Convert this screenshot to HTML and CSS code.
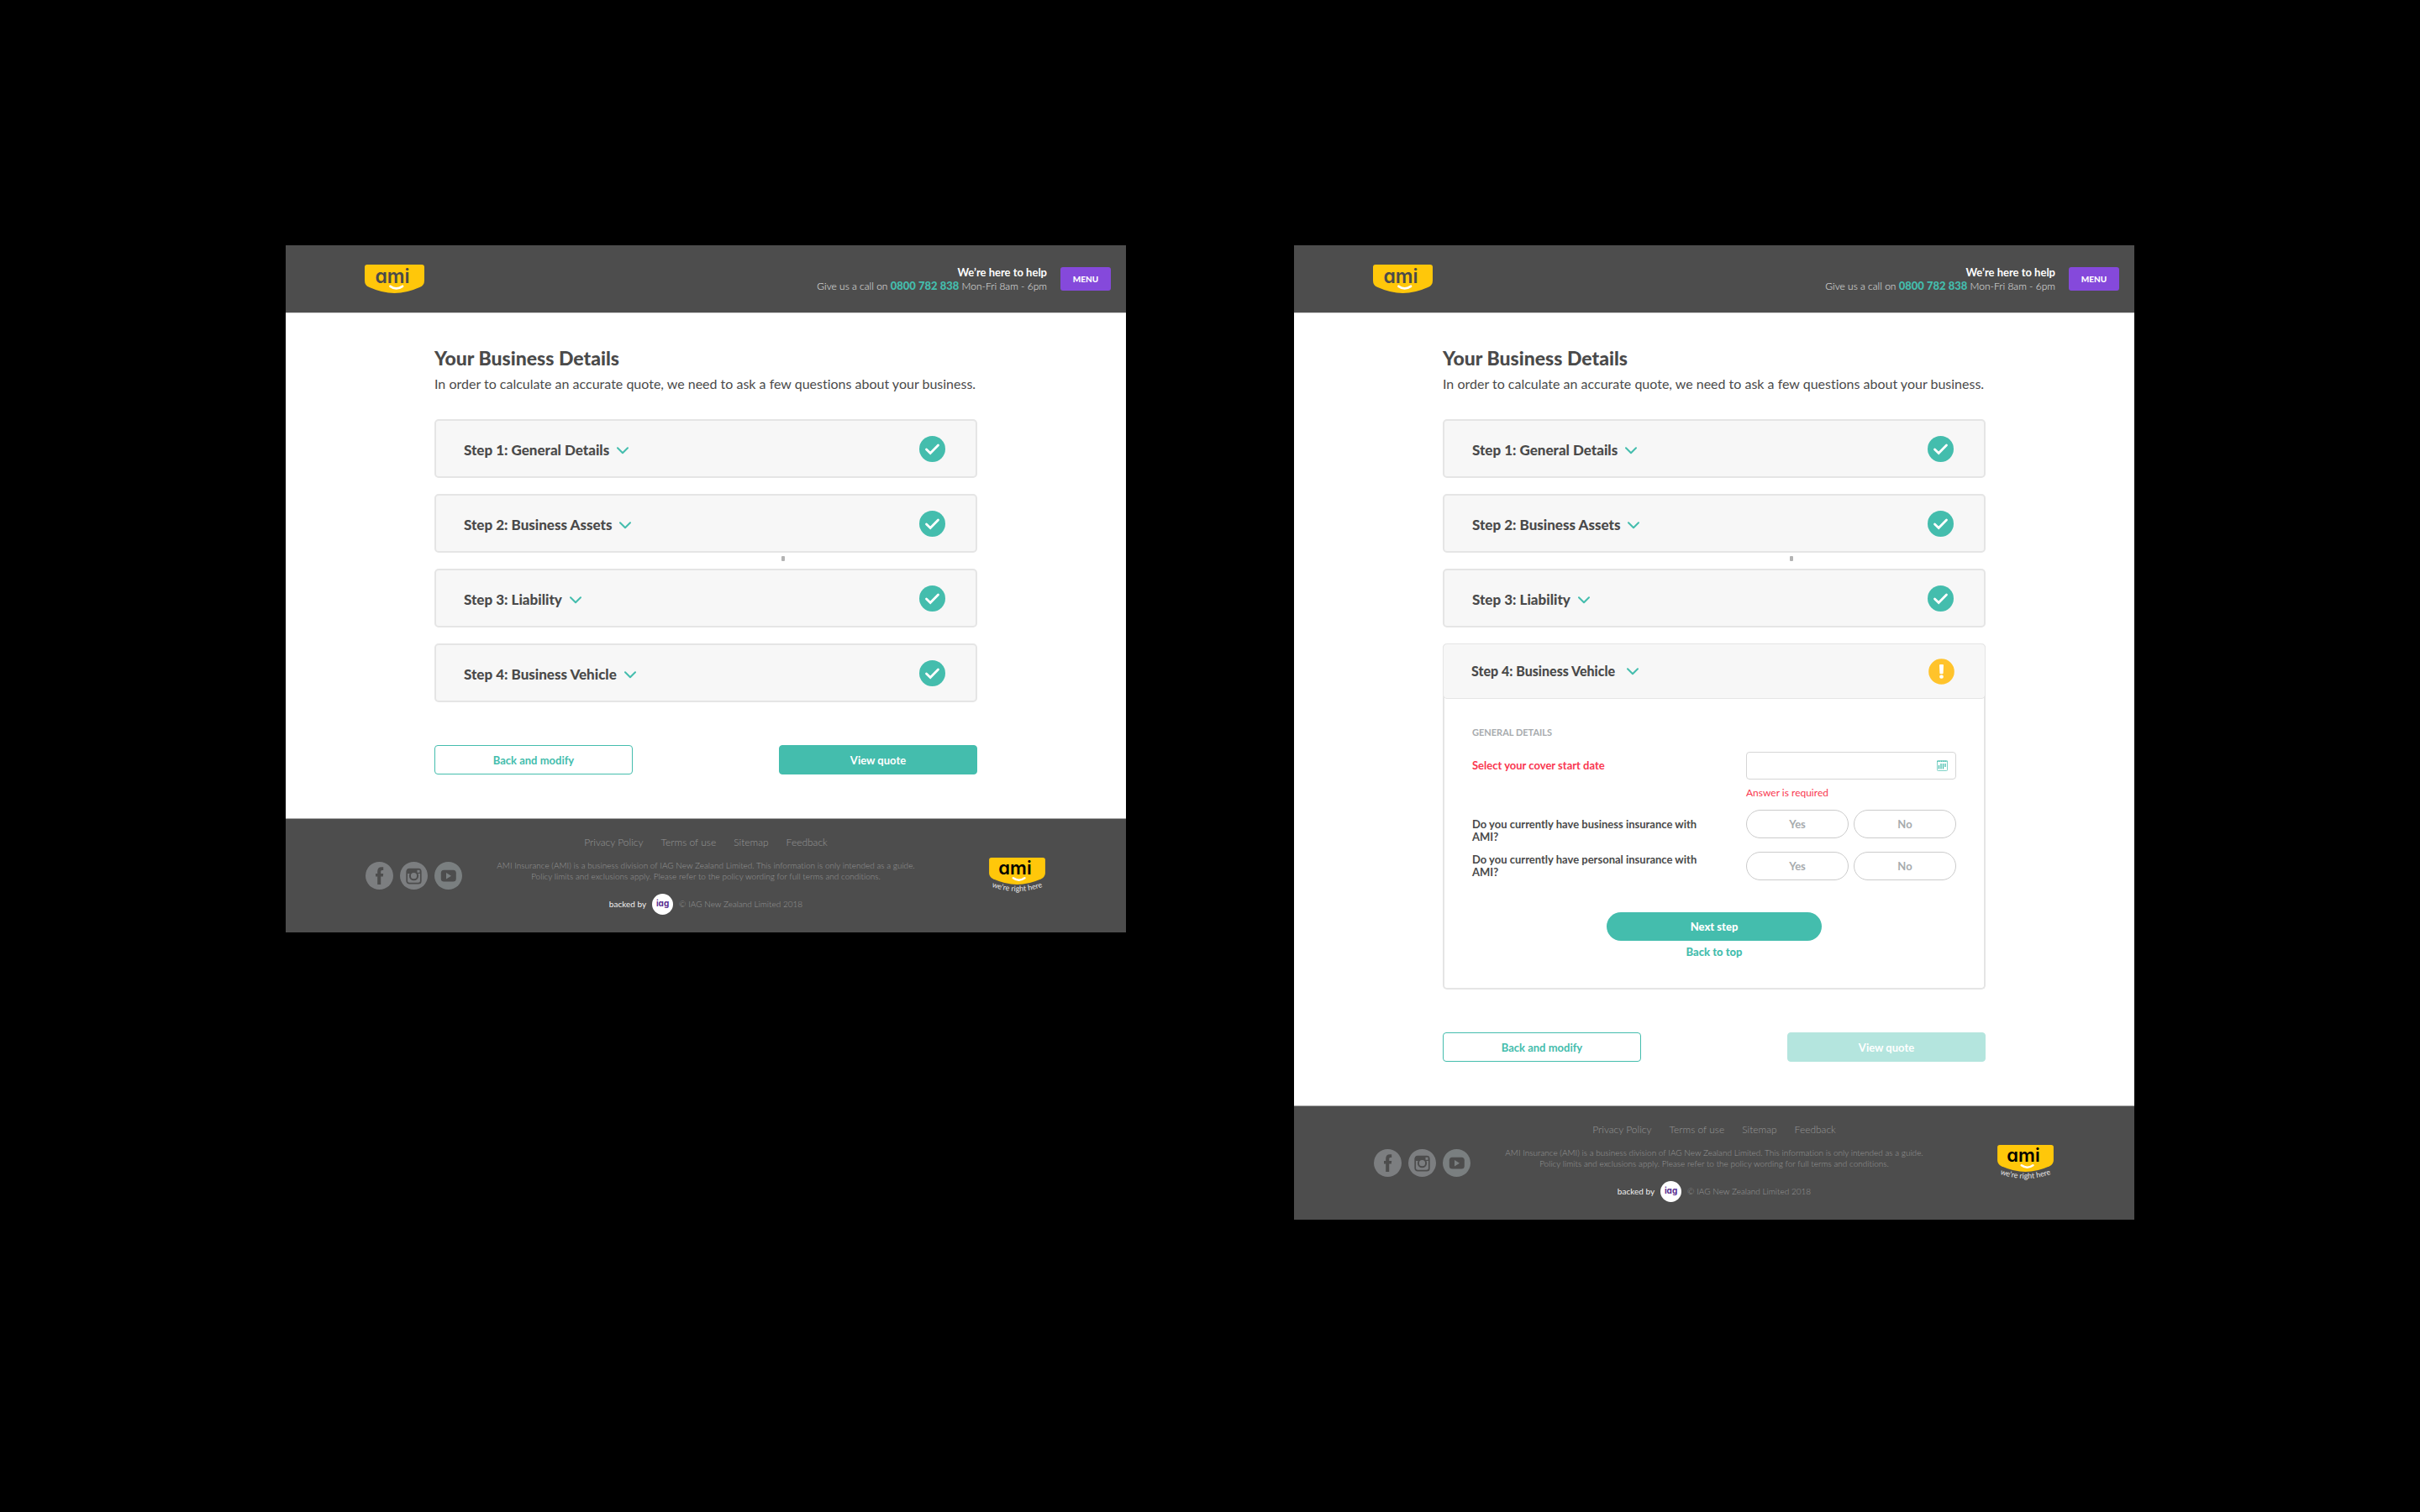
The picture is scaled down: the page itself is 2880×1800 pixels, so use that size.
FILE: index.html
```html
<!DOCTYPE html>
<html lang="en">
<head>
<meta charset="utf-8">
<meta name="viewport" content="width=device-width, initial-scale=1">
<title>AMI – Your Business Details</title>
<link rel="stylesheet" href="styles.css">
</head>
<body>
<svg class="sprite" aria-hidden="true">
  <symbol id="chevron" viewBox="0 0 14 9"><path d="M1 1.2 7 7.2 13 1.2" fill="none" stroke="#44bdad" stroke-width="2" stroke-linecap="round" stroke-linejoin="round"/></symbol>
  <symbol id="tick" viewBox="0 0 31 31"><circle cx="15.500" cy="15.500" r="15.500" fill="#44bdad"/><path d="M8.500 16 13.200 20.500 22.500 11" fill="none" stroke="#fff" stroke-width="2.800" stroke-linecap="round"/></symbol>
  <symbol id="warning" viewBox="0 0 31 31"><circle cx="15.500" cy="15.500" r="15.300" fill="#ffc32b"/><path d="M13 7.800Q13 7 14 7H17Q18 7 18 7.800L17.600 17Q17.500 18.200 16.800 18.200H14.200Q13.500 18.200 13.400 17Z" fill="#fff"/><rect x="13.200" y="19.500" width="4.600" height="4.200" rx="1.800" fill="#fff"/></symbol>
  <symbol id="badge" viewBox="0 0 71 34"><path d="M3 0H68Q71 0 71 3V19Q71 24.500 66 26.800Q50 34 35.500 34T5 26.800Q0 24.500 0 19V3Q0 0 3 0Z" fill="#ffc70a"/><path d="M30.500 25.800Q37.500 31 45 25.800" fill="none" stroke="#fff" stroke-width="2.800" stroke-linecap="round"/></symbol>
  <symbol id="facebook" viewBox="0 0 33 33"><circle cx="16.500" cy="16.500" r="16.500" fill="#7c7e80"/><path d="M14.200 27V17.500H12V14H14.200V11.500Q14.200 6.200 19 6.200H21.200V10H19.600Q18.200 10 18.200 11.500V14H21.200L20.800 17.500H18.200V27Z" fill="#4d4d4d"/></symbol>
  <symbol id="instagram" viewBox="0 0 33 33"><circle cx="16.500" cy="16.500" r="16.500" fill="#7c7e80"/><rect x="8.200" y="8.700" width="16.600" height="17" rx="3" fill="none" stroke="#4d4d4d" stroke-width="1.700"/><path d="M8 14V10.500Q8 8 11 8H22Q25 8 25 11V14H20.500A5.500 5.500 0 0 0 12.500 14Z" fill="#4d4d4d"/><circle cx="16.500" cy="16.700" r="4.600" fill="#7c7e80" stroke="#4d4d4d" stroke-width="2"/><rect x="20.500" y="9.800" width="3" height="3" fill="#7c7e80"/></symbol>
  <symbol id="youtube" viewBox="0 0 33 33"><circle cx="16.500" cy="16.500" r="16.500" fill="#7a7f80"/><rect x="7.800" y="9.800" width="18" height="13.800" rx="3.500" fill="#4d4d4d"/><path d="M14 13V20.500L20 16.700Z" fill="#7a7f80"/></symbol>
  <symbol id="calendar" viewBox="0 0 13 13"><rect x=".5" y=".8" width="12" height="11.700" rx=".8" fill="none" stroke="#7fd2c7"/><path d="M.5 1.300H12.500" stroke="#44bdad" stroke-width="1.500" stroke-dasharray="1.500 .7"/><path d="M2.500 6V10.500M5 4V10.500M7.500 4V10.500M10 4V8" stroke="#44bdad" stroke-width="1.300"/></symbol>
</svg>

<main class="board">
  <section class="page">
    <header class="site-header">
      <svg class="logo" viewBox="0 0 71 34" role="img" aria-label="AMI"><use href="#badge"/><text class="logo-word" x="33" y="22">ami</text></svg>
      <div class="contact">
        <p class="contact-lead">We’re here to help</p>
        <p>Give us a call on <a class="phone" href="tel:0800782838">0800 782 838</a> Mon-Fri 8am - 6pm</p>
      </div>
      <button class="menu" type="button">MENU</button>
    </header>
    <div class="content">
      <h1>Your Business Details</h1>
      <p class="intro">In order to calculate an accurate quote, we need to ask a few questions about your business.</p>
      <div class="steps">
        <button class="step" type="button"><span class="step-title">Step 1: General Details</span><svg class="chevron"><use href="#chevron"/></svg><svg class="status"><use href="#tick"/></svg></button>
        <button class="step step-marked" type="button"><span class="step-title">Step 2: Business Assets</span><svg class="chevron"><use href="#chevron"/></svg><svg class="status"><use href="#tick"/></svg></button>
        <button class="step" type="button"><span class="step-title">Step 3: Liability</span><svg class="chevron"><use href="#chevron"/></svg><svg class="status"><use href="#tick"/></svg></button>
        <button class="step" type="button"><span class="step-title">Step 4: Business Vehicle</span><svg class="chevron"><use href="#chevron"/></svg><svg class="status"><use href="#tick"/></svg></button>
      </div>
      <div class="actions">
        <button class="action action-outline" type="button">Back and modify</button>
        <button class="action action-solid" type="button">View quote</button>
      </div>
    </div>
    <footer class="site-footer">
      <div class="social">
        <a href="#facebook" aria-label="Facebook"><svg><use href="#facebook"/></svg></a>
        <a href="#instagram" aria-label="Instagram"><svg><use href="#instagram"/></svg></a>
        <a href="#youtube" aria-label="YouTube"><svg><use href="#youtube"/></svg></a>
      </div>
      <div class="legal">
        <nav class="links"><a href="#privacy">Privacy Policy</a><a href="#terms">Terms of use</a><a href="#sitemap">Sitemap</a><a href="#feedback">Feedback</a></nav>
        <p class="disclaimer">AMI Insurance (AMI) is a business division of IAG New Zealand Limited. This information is only intended as a guide.<br>Policy limits and exclusions apply. Please refer to the policy wording for full terms and conditions.</p>
        <p class="backed"><span class="backed-by">backed by</span><span class="iag">iag</span><span>© IAG New Zealand Limited 2018</span></p>
      </div>
      <svg class="logo-tagline" viewBox="0 0 69 43" role="img" aria-label="AMI, we're right here">
        <use href="#badge" width="69" height="32"/><text class="logo-word logo-word-small" x="32" y="20">ami</text>
        <path id="smile-a" d="M-3 32Q34.500 48 72 32" fill="none"/>
        <text class="tagline"><textPath href="#smile-a" startOffset="50%">we’re right here</textPath></text>
      </svg>
    </footer>
  </section>

  <section class="page">
    <header class="site-header">
      <svg class="logo" viewBox="0 0 71 34" role="img" aria-label="AMI"><use href="#badge"/><text class="logo-word" x="33" y="22">ami</text></svg>
      <div class="contact">
        <p class="contact-lead">We’re here to help</p>
        <p>Give us a call on <a class="phone" href="tel:0800782838">0800 782 838</a> Mon-Fri 8am - 6pm</p>
      </div>
      <button class="menu" type="button">MENU</button>
    </header>
    <div class="content">
      <h1>Your Business Details</h1>
      <p class="intro">In order to calculate an accurate quote, we need to ask a few questions about your business.</p>
      <div class="steps">
        <button class="step" type="button"><span class="step-title">Step 1: General Details</span><svg class="chevron"><use href="#chevron"/></svg><svg class="status"><use href="#tick"/></svg></button>
        <button class="step step-marked" type="button"><span class="step-title">Step 2: Business Assets</span><svg class="chevron"><use href="#chevron"/></svg><svg class="status"><use href="#tick"/></svg></button>
        <button class="step" type="button"><span class="step-title">Step 3: Liability</span><svg class="chevron"><use href="#chevron"/></svg><svg class="status"><use href="#tick"/></svg></button>
        <div class="step-open">
          <button class="step step-current" type="button" aria-expanded="true"><span>Step 4: Business Vehicle</span><svg class="chevron"><use href="#chevron"/></svg><svg class="status"><use href="#warning"/></svg></button>
          <form class="details">
            <h2>GENERAL DETAILS</h2>
            <div class="field field-date">
              <label class="question invalid" for="start-date">Select your cover start date</label>
              <div class="date-box">
                <input id="start-date" type="text" aria-describedby="start-error">
                <svg class="calendar"><use href="#calendar"/></svg>
              </div>
              <p class="error" id="start-error">Answer is required</p>
            </div>
            <div class="field field-first" role="radiogroup" aria-labelledby="q-business">
              <p class="question" id="q-business">Do you currently have business insurance with AMI?</p>
              <div class="choices">
                <label class="choice"><input type="radio" name="business" value="yes"><span>Yes</span></label>
                <label class="choice"><input type="radio" name="business" value="no"><span>No</span></label>
              </div>
            </div>
            <div class="field" role="radiogroup" aria-labelledby="q-personal">
              <p class="question" id="q-personal">Do you currently have personal insurance with AMI?</p>
              <div class="choices">
                <label class="choice"><input type="radio" name="personal" value="yes"><span>Yes</span></label>
                <label class="choice"><input type="radio" name="personal" value="no"><span>No</span></label>
              </div>
            </div>
            <div class="next">
              <button class="next-step" type="button">Next step</button>
              <a class="to-top" href="#top">Back to top</a>
            </div>
          </form>
        </div>
      </div>
      <div class="actions">
        <button class="action action-outline" type="button">Back and modify</button>
        <button class="action action-solid" type="button" disabled>View quote</button>
      </div>
    </div>
    <footer class="site-footer">
      <div class="social">
        <a href="#facebook" aria-label="Facebook"><svg><use href="#facebook"/></svg></a>
        <a href="#instagram" aria-label="Instagram"><svg><use href="#instagram"/></svg></a>
        <a href="#youtube" aria-label="YouTube"><svg><use href="#youtube"/></svg></a>
      </div>
      <div class="legal">
        <nav class="links"><a href="#privacy">Privacy Policy</a><a href="#terms">Terms of use</a><a href="#sitemap">Sitemap</a><a href="#feedback">Feedback</a></nav>
        <p class="disclaimer">AMI Insurance (AMI) is a business division of IAG New Zealand Limited. This information is only intended as a guide.<br>Policy limits and exclusions apply. Please refer to the policy wording for full terms and conditions.</p>
        <p class="backed"><span class="backed-by">backed by</span><span class="iag">iag</span><span>© IAG New Zealand Limited 2018</span></p>
      </div>
      <svg class="logo-tagline" viewBox="0 0 69 43" role="img" aria-label="AMI, we're right here">
        <use href="#badge" width="69" height="32"/><text class="logo-word logo-word-small" x="32" y="20">ami</text>
        <path id="smile-b" d="M-3 32Q34.500 48 72 32" fill="none"/>
        <text class="tagline"><textPath href="#smile-b" startOffset="50%">we’re right here</textPath></text>
      </svg>
    </footer>
  </section>
</main>
</body>
</html>
```
FILE: styles.css
```css
* { box-sizing: border-box; }

body {
  margin: 0;
  background: #000;
  color: #4a4a4a;
  font-family: Lato, "Open Sans", sans-serif;
  font-variant-ligatures: none;
}

h1, h2, p { margin: 0; }
a { color: inherit; text-decoration: none; }
button { font-family: inherit; cursor: pointer; }
svg { display: block; flex: none; overflow: visible; }

.sprite { position: absolute; width: 0; height: 0; }

.board {
  display: grid;
  grid-template-columns: 1fr 1fr;
  align-items: start;
  gap: 200px;
  padding: 292px 340px;
}

.page { background: #fff; }

/* Header */
.site-header {
  display: flex;
  align-items: center;
  height: 81px;
  padding: 0 18px 0 94px;
  background: #4d4d4d;
  border-bottom: 1px solid #d5d5d5;
}

.logo { width: 71px; height: 34px; }
.logo-word {
  font-family: Inter, sans-serif;
  font-feature-settings: "cv11";
  font-size: 23px;
  font-weight: 600;
  text-anchor: middle;
  fill: #4a4a4a;
}
.logo-word-small { font-size: 22px; fill: #000; }

.contact {
  margin-left: auto;
  color: #e6e6e6;
  font-size: 12px;
  font-weight: 300;
  line-height: 16px;
  text-align: right;
}
.contact-lead { color: #fff; font-size: 13px; font-weight: 700; }
.phone { color: #44bdad; font-size: 13px; font-weight: 900; }

.menu {
  width: 60px;
  height: 28px;
  margin-left: 16px;
  padding: 0;
  border: 0;
  border-radius: 3px;
  background: #8549db;
  color: #fff;
  font-size: 10px;
  font-weight: 900;
}

/* Content */
.content { padding: 39px 177px 52px; }
h1 { font-size: 23px; font-weight: 900; line-height: 28px; }
.intro { margin-top: 5px; font-size: 16px; line-height: 24px; }

.steps { display: grid; gap: 19px; margin-top: 30px; }
.step {
  position: relative;
  display: flex;
  align-items: center;
  gap: 9px;
  width: 100%;
  height: 70px;
  padding: 0 36px 0 33px;
  border: 2px solid #e5e5e5;
  border-radius: 5px;
  background: #f7f7f7;
  color: #4a4a4a;
  font-size: 17px;
  font-weight: 900;
  line-height: 24px;
}
.step-title { padding-top: 3px; }
.chevron { width: 14px; height: 9px; }
.step-title + .chevron { margin-top: 4px; }
.status { width: 31px; height: 31px; margin-left: auto; }

/* Small handle that hangs under the second step */
.step-marked::after {
  content: "";
  position: absolute;
  top: 72px;
  left: 64%;
  width: 4px;
  height: 6px;
  border-radius: 1px;
  background: #b4b4b4;
}

.step-open { border: 2px solid #e5e5e5; border-top: 0; border-radius: 5px; }
.step-current {
  width: auto;
  min-width: calc(100% + 4px);
  height: 66px;
  margin: 0 -2px;
  gap: 14px;
  border-width: 1px;
  font-size: 16px;
}

.details { padding: 32px 33px 35px; }
h2 { color: #a7abae; font-size: 11px; font-weight: 700; line-height: 16px; }

.field {
  display: grid;
  grid-template-columns: 1fr 250px;
  column-gap: 44px;
  align-items: center;
}
.field-date { margin-top: 15px; margin-bottom: 12px; }
.field-first { align-items: start; margin-bottom: 10px; }
.field-first .question { padding-top: 10px; }

.question { font-size: 13px; font-weight: 700; line-height: 15px; }
.invalid { color: #f9374f; }
.date-box { position: relative; }
.date-box input {
  display: block;
  width: 100%;
  height: 33px;
  padding: 0 36px 0 10px;
  border: 1px solid #d6d6d6;
  border-radius: 4px;
  font: inherit;
}
.calendar { position: absolute; top: 10px; right: 10px; width: 13px; height: 13px; }
.error { grid-column: 2; margin-top: 8px; color: #f9374f; font-size: 12px; line-height: 16px; }

.choices { display: grid; grid-template-columns: 1fr 1fr; gap: 6px; }
.choice {
  position: relative;
  display: grid;
  place-items: center;
  height: 34px;
  color: #a7abae;
  font-size: 13px;
  font-weight: 700;
}
.choice input {
  appearance: none;
  position: absolute;
  inset: 0;
  margin: 0;
  border: 1px solid #cbcbcb;
  border-radius: 17px;
}

.next { display: flex; flex-direction: column; align-items: center; gap: 5px; margin-top: 38px; }
.next-step {
  width: 256px;
  height: 34px;
  border: 0;
  border-radius: 17px;
  background: #44bdad;
  color: #fff;
  font-size: 13px;
  font-weight: 900;
}
.to-top { color: #44bdad; font-size: 13px; font-weight: 900; line-height: 16px; }

.actions { display: flex; justify-content: space-between; margin-top: 51px; }
.action {
  width: 236px;
  height: 35px;
  border: 1px solid #44bdad;
  border-radius: 4px;
  font-size: 13px;
  font-weight: 700;
}
.action-outline { background: #fff; color: #44bdad; }
.action-solid { background: #44bdad; color: #fff; }
.action-solid:disabled { border-color: #b4e5de; background: #b4e5de; }

/* Footer */
.site-footer {
  display: grid;
  grid-template-columns: 1fr auto 1fr;
  align-items: center;
  padding: 20px 95px 21px;
  border-top: 1px solid #a6a6a6;
  background: #4d4d4d;
  color: #969696;
  font-weight: 300;
}
.social { display: flex; gap: 8px; }
.social svg { width: 33px; height: 33px; }
.legal { text-align: center; }
.links { display: flex; justify-content: center; gap: 21px; font-size: 12px; line-height: 16px; }
.disclaimer { margin-top: 13px; font-size: 10px; line-height: 13px; }
.backed {
  display: flex;
  align-items: center;
  justify-content: center;
  gap: 7px;
  margin-top: 14px;
  font-size: 10px;
  line-height: 13px;
}
.backed-by { color: #f0f0f0; font-weight: 400; }
.iag {
  width: 25px;
  height: 25px;
  border-radius: 50%;
  background: #fff;
  color: #5a2d91;
  font-family: Inter, sans-serif;
  font-feature-settings: "cv11";
  font-size: 10px;
  font-weight: 700;
  line-height: 23px;
  text-align: center;
}
.logo-tagline { justify-self: end; width: 69px; height: 43px; }
.tagline { font-size: 9px; font-weight: 400; text-anchor: middle; fill: #e6e6e6; }
```
